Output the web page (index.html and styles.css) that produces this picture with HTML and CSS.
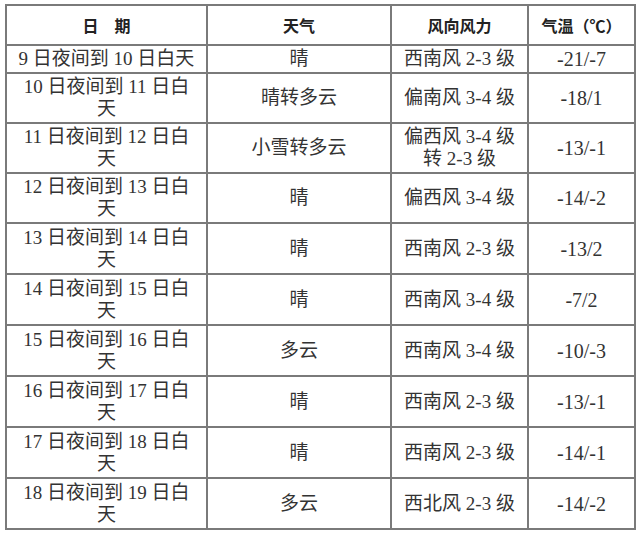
FILE: index.html
```html
<!DOCTYPE html>
<html lang="zh">
<head>
<meta charset="utf-8">
<title>天气预报</title>
<link rel="stylesheet" href="styles.css">
</head>
<body>
<table class="forecast">
  <colgroup>
    <col class="c-date">
    <col class="c-weather">
    <col class="c-wind">
    <col class="c-temp">
  </colgroup>
  <thead>
    <tr class="head">
      <th>日　期</th>
      <th>天气</th>
      <th>风向风力</th>
      <th>气温（℃）</th>
    </tr>
  </thead>
  <tbody>
    <tr class="short">
      <td class="date">9 日夜间到 10 日白天</td>
      <td>晴</td>
      <td>西南风 2-3 级</td>
      <td class="temp">-21/-7</td>
    </tr>
    <tr>
      <td class="date">10 日夜间到 11 日白天</td>
      <td>晴转多云</td>
      <td>偏南风 3-4 级</td>
      <td class="temp">-18/1</td>
    </tr>
    <tr>
      <td class="date">11 日夜间到 12 日白天</td>
      <td>小雪转多云</td>
      <td>偏西风 3-4 级<br>转 2-3 级</td>
      <td class="temp">-13/-1</td>
    </tr>
    <tr>
      <td class="date">12 日夜间到 13 日白天</td>
      <td>晴</td>
      <td>偏西风 3-4 级</td>
      <td class="temp">-14/-2</td>
    </tr>
    <tr class="tall">
      <td class="date">13 日夜间到 14 日白天</td>
      <td>晴</td>
      <td>西南风 2-3 级</td>
      <td class="temp">-13/2</td>
    </tr>
    <tr class="tall">
      <td class="date">14 日夜间到 15 日白天</td>
      <td>晴</td>
      <td>西南风 3-4 级</td>
      <td class="temp">-7/2</td>
    </tr>
    <tr class="tall">
      <td class="date">15 日夜间到 16 日白天</td>
      <td>多云</td>
      <td>西南风 3-4 级</td>
      <td class="temp">-10/-3</td>
    </tr>
    <tr class="tall">
      <td class="date">16 日夜间到 17 日白天</td>
      <td>晴</td>
      <td>西南风 2-3 级</td>
      <td class="temp">-13/-1</td>
    </tr>
    <tr class="tall">
      <td class="date">17 日夜间到 18 日白天</td>
      <td>晴</td>
      <td>西南风 2-3 级</td>
      <td class="temp">-14/-1</td>
    </tr>
    <tr class="tall">
      <td class="date">18 日夜间到 19 日白天</td>
      <td>多云</td>
      <td>西北风 2-3 级</td>
      <td class="temp">-14/-2</td>
    </tr>
  </tbody>
</table>
</body>
</html>
```
FILE: styles.css
```css
html, body {
  margin: 0;
  padding: 0;
  background: #ffffff;
}

body {
  padding: 4px 0 0 5px;
  font-family: "Liberation Serif", "Noto Sans CJK SC", serif;
  color: #333333;
}

.forecast {
  border-collapse: collapse;
  table-layout: fixed;
  width: 629px;
}

.c-date { width: 201px; }
.c-weather { width: 184px; }
.c-wind { width: 137px; }
.c-temp { width: 107px; }

.forecast th,
.forecast td {
  border: 2px solid #7a7a7a;
  text-align: center;
  vertical-align: middle;
  padding: 0 6px;
}

.forecast th {
  font-size: 16px;
  font-weight: bold;
  color: #222222;
  height: 38px;
}

.forecast td {
  font-size: 19px;
  line-height: 22px;
  height: 48px;
}

.forecast tr.tall td {
  height: 49px;
}

.forecast td.date {
  padding: 0 11px;
}

.forecast td.temp {
  font-size: 20px;
}

.forecast tr.short td {
  height: 26px;
  line-height: 24px;
}
```
